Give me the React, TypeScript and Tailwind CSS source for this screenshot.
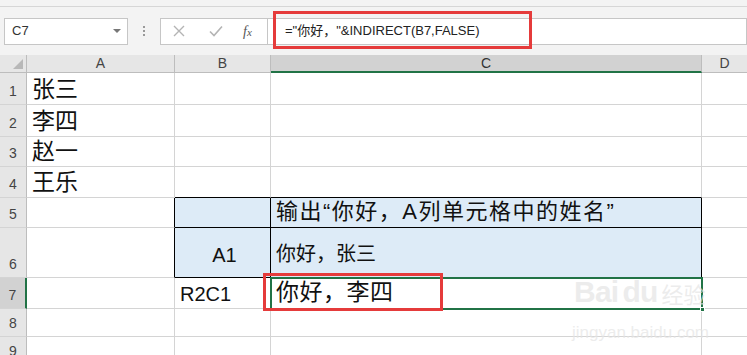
import React from 'react'

const FONT = { fontFamily: "'Liberation Sans', 'Noto Sans CJK SC', sans-serif" }

type Row = { n: number; h: number; a?: string; b?: React.ReactNode; c?: React.ReactNode; kind?: 'blue' | 'above' | 'sel' }

const rows: Row[] = [
  { n: 1, h: 32, a: '张三' },
  { n: 2, h: 32, a: '李四' },
  { n: 3, h: 30, a: '赵一' },
  { n: 4, h: 31, a: '王乐', kind: 'above' },
  { n: 5, h: 30, c: '输出“你好，A列单元格中的姓名”', kind: 'blue' },
  { n: 6, h: 50, b: 'A1', c: '你好，张三', kind: 'blue' },
  { n: 7, h: 31, b: 'R2C1', c: '你好，李四', kind: 'sel' },
  { n: 8, h: 28 },
  { n: 9, h: 28 },
]

function GridRow({ r }: { r: Row }) {
  const blue = r.kind === 'blue'
  const sel = r.kind === 'sel'
  const above = r.kind === 'above'
  const tall = r.n === 6
  return (
    <div className="flex" style={{ height: r.h }}>
      <div
        className={`w-[27px] shrink-0 flex items-end justify-center pb-[2px] text-[14px] text-[#444] border-b border-[#d4d4d4] ${
          sel ? 'bg-[#d2d2d2] border-r-2 border-r-[#217346]' : 'bg-[#e6e6e6] border-r border-r-[#bdbdbd]'
        }`}
      >
        {r.n}
      </div>
      <div
        className={`w-[148px] shrink-0 flex items-end pl-[5px] text-[23px] leading-[30px] text-[#111] border-b border-b-[#d4d4d4] border-r ${
          blue ? 'border-r-black' : 'border-r-[#d4d4d4]'
        }`}
      >
        {r.a}
      </div>
      <div
        className={`w-[96px] shrink-0 flex items-end text-[20px] leading-[28px] text-[#111] border-r border-b ${
          blue ? 'bg-[#ddebf7] border-black justify-center pl-[4px]' : above ? 'border-r-[#d4d4d4] border-b-black' : 'border-[#d4d4d4] pl-[5px]'
        } ${sel ? 'border-b-[#d4d4d4]' : ''} ${tall ? 'pb-[8px]' : ''}`}
      >
        {r.b}
      </div>
      <div
        className={`w-[431px] shrink-0 flex items-end pl-[5px] pb-[1px] text-[#111] border-r border-b ${
          blue ? 'bg-[#ddebf7] border-black' : above ? 'border-r-[#d4d4d4] border-b-black' : 'border-[#d4d4d4]'
        } ${sel ? 'text-[23px] leading-[30px] tracking-[0.5px]' : r.n === 5 ? 'text-[22px] leading-[28px] tracking-[1.5px]' : 'text-[20px] leading-[28px]'} ${tall ? 'pb-[9px]' : ''}`}
      >
        {r.c}
      </div>
      <div className="flex-1 border-b border-[#d4d4d4]" />
    </div>
  )
}

export default function App() {
  return (
    <div className="relative w-[747px] h-[355px] overflow-hidden bg-white" style={FONT}>
      {/* ribbon remnant */}
      <div className="h-[7px] bg-[#f3f3f3] border-b border-[#d6d6d6]" />

      {/* formula bar */}
      <div className="h-[48px] bg-[#f3f3f3] flex items-center">
        <div className="ml-[4px] w-[124px] h-[27px] bg-white border border-[#c6c6c6] flex items-center justify-between pl-[7px] pr-[6px]">
          <span className="text-[13px] text-[#333]">C7</span>
          <span className="w-0 h-0 border-l-[4px] border-r-[4px] border-t-[4px] border-l-transparent border-r-transparent border-t-[#777]" />
        </div>
        <div className="w-[32px] flex flex-col items-center gap-[2px]">
          <span className="w-[2px] h-[2px] bg-[#999]" />
          <span className="w-[2px] h-[2px] bg-[#999]" />
          <span className="w-[2px] h-[2px] bg-[#999]" />
        </div>
        <div className="w-[108px] h-[27px] bg-white border border-[#c6c6c6] flex items-center">
          <svg width="12" height="12" viewBox="0 0 12 12" className="ml-[12px]">
            <path d="M1 1 L11 11 M11 1 L1 11" stroke="#b4b4b4" strokeWidth="1.4" />
          </svg>
          <svg width="14" height="12" viewBox="0 0 14 12" className="ml-[24px]">
            <path d="M1 6.5 L5 10.5 L13 1.5" stroke="#b4b4b4" strokeWidth="1.6" fill="none" />
          </svg>
          <span className="ml-[20px] text-[14px] italic text-[#555]" style={{ fontFamily: "'Liberation Serif', serif" }}>
            f<span className="text-[11px]">x</span>
          </span>
        </div>
        <div className="flex-1 h-[27px] bg-white border border-l-0 border-[#c6c6c6] flex items-center pl-[17px] text-[13px] text-[#222]">
          ="你好，"&amp;INDIRECT(B7,FALSE)
        </div>
      </div>

      {/* column headers */}
      <div className="flex h-[18px] text-[14px] text-[#444]">
        <div className="w-[27px] shrink-0 bg-[#e6e6e6] border-r border-b border-[#bdbdbd] relative">
          <span className="absolute right-[3px] bottom-[3px] w-0 h-0" style={{ borderBottom: '10px solid #b8b8b8', borderLeft: '10px solid transparent' }} />
        </div>
        <div className="w-[148px] shrink-0 bg-[#e6e6e6] border-r border-b border-[#bdbdbd] flex items-center justify-center">A</div>
        <div className="w-[96px] shrink-0 bg-[#e6e6e6] border-r border-b border-[#bdbdbd] flex items-center justify-center">B</div>
        <div className="w-[431px] shrink-0 bg-[#d2d2d2] border-r border-[#bdbdbd] border-b-2 border-b-[#217346] flex items-center justify-center text-[#333]">C</div>
        <div className="flex-1 bg-[#e6e6e6] border-b border-[#bdbdbd] flex items-center justify-center">D</div>
      </div>

      {rows.map((r) => (
        <GridRow key={r.n} r={r} />
      ))}

      {/* active cell C7 */}
      <div className="absolute left-[270px] top-[277px] w-[433px] h-[33px] border-2 border-[#217346]" />
      <div className="absolute left-[700px] top-[307px] w-[5px] h-[5px] bg-[#217346] border border-white" />

      {/* red annotation boxes */}
      <div className="absolute left-[273px] top-[11px] w-[259px] h-[38px] border-[3px] border-[#e53b3b]" />
      <div className="absolute left-[263px] top-[273px] w-[180px] h-[38px] border-[3px] border-[#e53b3b]" />

      {/* watermark */}
      <div className="absolute left-[574px] top-[277px] flex items-end gap-[4px] text-[#e4e4e4]/70 pointer-events-none">
        <span className="text-[30px] font-bold leading-none tracking-tight">Bai</span>
        <span className="text-[30px] font-bold leading-none tracking-tight">du</span>
        <span className="text-[22px] leading-none">经验</span>
      </div>
      <div className="absolute left-[572px] top-[320px] text-[17px] text-[#e4e4e4]/70 pointer-events-none">jingyan.baidu.com</div>
    </div>
  )
}
